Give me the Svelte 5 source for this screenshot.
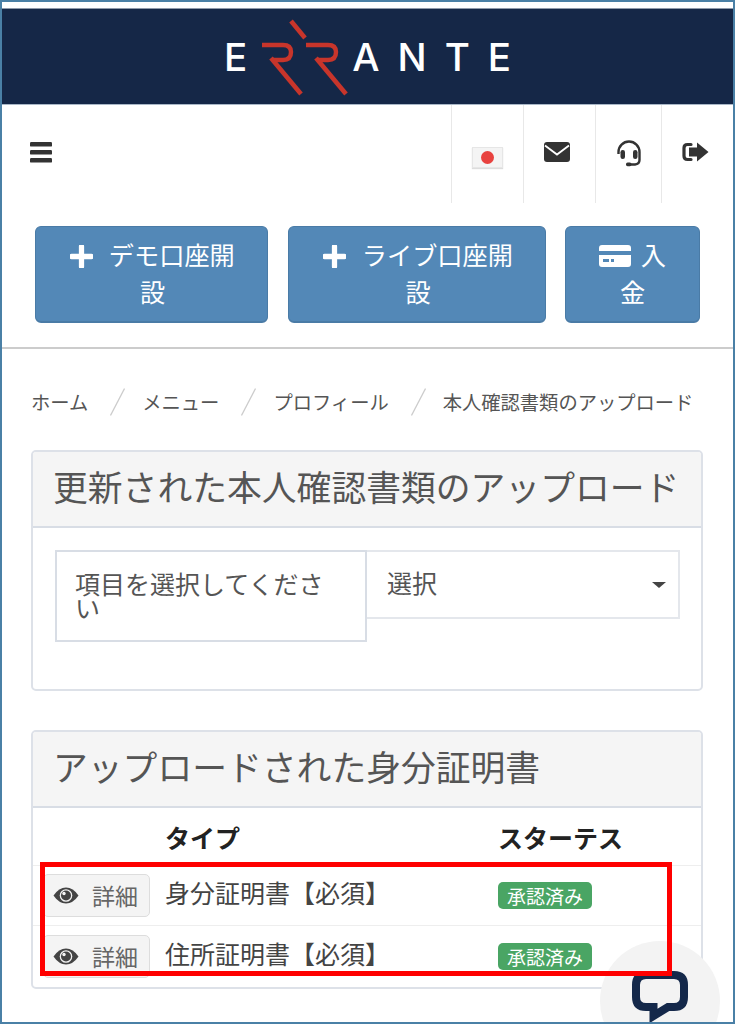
<script>
  const crumbs = ['ホーム', 'メニュー', 'プロフィール', '本人確認書類のアップロード'];
  const docs = ['身分証明書【必須】', '住所証明書【必須】'];
</script>

<div class="frame">
  <header class="brand">
    <span class="e">E</span>
    <svg class="rr" viewBox="0 0 104 97" width="104" height="97" aria-hidden="true">
      <g fill="none" stroke="#c8352b" stroke-width="4.4" stroke-linejoin="round">
        <path d="M15 37H36Q44 37 44 44Q44 52 36 52H26" />
        <path d="M24 50L54 86" stroke-width="4.6" />
        <path d="M44 13L58 30" stroke-width="4.6" />
        <path d="M59 37H81Q89 37 89 44Q89 52 81 52H71" />
        <path d="M69 50L99 86" stroke-width="4.6" />
      </g>
    </svg>
    <span class="ante">ANTE</span>
  </header>

  <nav class="topnav">
    <button class="burger" aria-label="menu">
      <svg viewBox="0 0 24 22" width="24" height="22"><g fill="#333"><rect x="1" y="1" width="22" height="4.6" rx="1.2"/><rect x="1" y="9" width="22" height="4.6" rx="1.2"/><rect x="1" y="17" width="22" height="4.6" rx="1.2"/></g></svg>
    </button>
    <div class="tools">
      <div class="tool flagcell">
        <span class="flag"><i></i></span>
      </div>
      <div class="tool mail">
        <svg viewBox="0 0 26 20" width="26" height="20"><rect width="26" height="20" rx="3" fill="#333"/><path d="M1 3.5L13 12.5L25 3.5" fill="none" stroke="#fff" stroke-width="1.8"/></svg>
      </div>
      <div class="tool narrow">
        <svg viewBox="0 0 28 27" width="28" height="27" fill="none" stroke="#333"><path d="M3.5 14V12A10.5 10.5 0 0 1 24.5 12V20Q24.5 24 20 24.5H15" stroke-width="2.4"/><rect x="5.5" y="10" width="4.5" height="9" rx="2.2" fill="#333" stroke="none"/><rect x="18" y="10" width="4.5" height="9" rx="2.2" fill="#333" stroke="none"/><rect x="11" y="22.6" width="5.5" height="3.6" rx="1.6" fill="#333" stroke="none"/></svg>
      </div>
      <div class="tool out">
        <svg viewBox="0 0 27 20" width="27" height="20"><path d="M9 2.5H5.5Q2 2.5 2 6V14Q2 17.5 5.5 17.5H9" fill="none" stroke="#333" stroke-width="3.2" stroke-linecap="round"/><path d="M15 0.5L26.5 10L15 19.5V14.5H7V5.500H15Z" fill="#333"/></svg>
      </div>
    </div>
  </nav>

  <div class="actions">
    <button class="act a1"><svg class="plus" viewBox="0 0 24 24" width="23" height="23"><path d="M12 1.500V22.500M1.500 12H22.500" stroke="#fff" stroke-width="5.500" stroke-linecap="round"/></svg> <span>デモ口座開設</span></button>
    <button class="act a2"><svg class="plus" viewBox="0 0 24 24" width="23" height="23"><path d="M12 1.500V22.500M1.500 12H22.500" stroke="#fff" stroke-width="5.500" stroke-linecap="round"/></svg> <span>ライブ口座開設</span></button>
    <button class="act a3"><svg class="card" viewBox="0 0 32 22" width="32" height="22"><path fill="#fff" d="M3 0H29Q32 0 32 3V6H0V3Q0 0 3 0ZM0 10H32V19Q32 22 29 22H3Q0 22 0 19ZM4 14V17H10V14ZM12 14V17H15V14Z" fill-rule="evenodd"/></svg> <span>入金</span></button>
  </div>

  <ol class="crumbs">
    {#each crumbs as c, i}
      {#if i > 0}
        <li class="sep" aria-hidden="true"><svg viewBox="0 0 15 28" width="15" height="28"><path d="M14.500 0.500L0.500 27.500" stroke="#ccc" stroke-width="1.300"/></svg></li>
      {/if}
      <li>{c}</li>
    {/each}
  </ol>

  <section class="panel first">
    <h2>更新された本人確認書類のアップロード</h2>
    <div class="pbody">
      <div class="label">項目を選択してください</div>
      <div class="select"><span>選択</span><i class="caret"></i></div>
    </div>
  </section>

  <section class="panel second">
    <h2>アップロードされた身分証明書</h2>
    <table>
      <thead>
        <tr><th class="c1"></th><th class="c2">タイプ</th><th>スターテス</th></tr>
      </thead>
      <tbody>
        {#each docs as d}
          <tr>
            <td class="c1">
              <button class="detail">
                <svg viewBox="0 0 26 17" width="26" height="17"><path d="M0.500 8.500Q6 0.500 13 0.500T25.500 8.500Q20 16.500 13 16.500T0.500 8.500Z" fill="#444"/><circle cx="13" cy="8.500" r="6.300" fill="#f3f3f3"/><circle cx="13" cy="8.500" r="5" fill="#444"/><circle cx="11" cy="6.500" r="1.700" fill="#f3f3f3"/></svg>
                <span>詳細</span>
              </button>
            </td>
            <td class="c2"><span class="doc">{d}</span></td>
            <td><span class="badge">承認済み</span></td>
          </tr>
        {/each}
      </tbody>
    </table>
  </section>

  <div class="chat">
    <svg viewBox="0 0 56 54" width="56" height="54"><path d="M14 4H42Q52 4 52 14V26Q52 36 42 36H36L21.500 45V36H14Q4 36 4 26V14Q4 4 14 4Z" fill="none" stroke="#14284a" stroke-width="8" stroke-linejoin="miter"/></svg>
  </div>
  <div class="redbox"></div>
</div>

<style>
  :global(body) {
    margin: 0;
    background: #fff;
  }
  .frame {
    position: relative;
    box-sizing: border-box;
    width: 735px;
    height: 1024px;
    overflow: hidden;
    border: 2px solid #4a80a6;
    padding-top: 6px;
    background: #fff;
    color: #555;
    font-family: "Noto Sans CJK JP", "Noto Sans", sans-serif;
    text-spacing-trim: space-all;
  }
  button {
    font: inherit;
    cursor: pointer;
  }

  .brand {
    height: 97px;
    display: flex;
    align-items: center;
    justify-content: center;
    background: #152747;
    color: #fff;
    font-family: Inter, sans-serif;
    font-weight: 500;
    font-size: 38.500px;
    line-height: 1;
    border-bottom: 1px solid #a9b7c7;
    box-sizing: border-box;
    border-top: 1px solid #8f9aab;
  }
  .e {
    position: relative;
    top: 1px;
  }
  .rr {
    flex: none;
    margin-right: 1px;
  }
  .ante {
    letter-spacing: 18px;
    margin-right: -18px;
    position: relative;
    top: 1px;
  }

  .topnav {
    height: 98px;
    display: flex;
    justify-content: space-between;
  }
  .burger {
    border: 0;
    background: none;
    padding: 0;
    margin: 36px 0 0 27px;
    height: 24px;
    display: flex;
  }
  .tools {
    display: flex;
  }
  .tool {
    width: 71px;
    border-left: 1px solid #e8e8e8;
    display: flex;
    justify-content: center;
    align-items: flex-start;
    padding-top: 35px;
    box-sizing: content-box;
  }
  .tool.narrow {
    width: 65px;
  }
  .tool.mail {
    padding: 37px 6px 0 0;
    width: 65px;
  }
  .tool.out {
    padding: 37px 4px 0 0;
    width: 67px;
  }
  .flagcell {
    padding-top: 42px;
  }
  .flag {
    width: 31px;
    height: 21px;
    background: #f4f4f4;
    box-shadow: inset 0 0 0 1px #e6e6e6, 0 1px 1px #ddd;
    display: flex;
    align-items: center;
    justify-content: center;
  }
  .flag i {
    width: 13px;
    height: 13px;
    border-radius: 50%;
    background: #e8423f;
  }

  .actions {
    display: flex;
    gap: 20px;
    padding: 23px 0 24px 33px;
    border-bottom: 2px solid #ccc;
  }
  .act {
    flex: none;
    height: 97px;
    box-sizing: border-box;
    background: #5388b7;
    border: 1px solid #4a7ba6;
    border-bottom-width: 2px;
    border-radius: 6px;
    color: #fff;
    font-size: 25.200px;
    line-height: 37px;
    padding: 9px 21px 13px 23px;
    text-align: center;
  }
  .a1 { width: 233px; }
  .a2 { width: 258px; }
  .a3 { width: 135px; padding: 9px 28px 13px 28px; margin-left: -1px; }
  .plus {
    vertical-align: -3px;
    margin-right: 10px;
  }
  .card {
    vertical-align: -2px;
    margin-right: 4px;
  }

  .crumbs {
    list-style: none;
    margin: 0;
    padding: 0 0 0 29px;
    height: 101px;
    display: flex;
    align-items: center;
    font-size: 19.300px;
    line-height: 28px;
    white-space: nowrap;
    color: #555;
    position: relative;
    top: 2px;
  }
  .sep {
    display: flex;
    margin: 0 17px 0 22px;
  }

  .panel {
    margin: 0 30px 0 29px;
    border: 2px solid #dde1e8;
    border-radius: 5px;
    overflow: hidden;
  }
  .panel h2 {
    margin: 0;
    height: 76px;
    box-sizing: border-box;
    background: #f5f5f5;
    border-bottom: 2px solid #d8dde5;
    font-size: 34.800px;
    font-weight: 400;
    line-height: 68px;
    padding-left: 20px;
    white-space: nowrap;
    color: #555;
  }
  .first {
    height: 241px;
    box-sizing: border-box;
  }
  .pbody {
    display: flex;
    align-items: flex-start;
    padding: 22px 21px 0 22px;
    font-size: 25px;
    line-height: 24px;
  }
  .label {
    width: 312px;
    height: 92px;
    box-sizing: border-box;
    border: 2px solid #d8dde5;
    padding: 19px 18px;
  }
  .select {
    flex: 1;
    height: 69px;
    box-sizing: border-box;
    border: 2px solid #e4e7ec;
    border-left: 0;
    display: flex;
    justify-content: space-between;
    align-items: center;
    padding: 0 12px 5px 20px;
  }
  .caret {
    width: 0;
    height: 0;
    border-left: 7px solid transparent;
    border-right: 7px solid transparent;
    border-top: 6px solid #444;
    margin-top: 6px;
  }

  .second {
    margin-top: 39px;
    height: 259px;
    box-sizing: border-box;
  }
  table {
    border-collapse: collapse;
    width: 100%;
    table-layout: fixed;
    font-size: 25px;
  }
  thead tr {
    height: 57px;
    border-bottom: 1px solid #eee;
  }
  th {
    text-align: left;
    font-weight: 700;
    color: #222;
    font-size: 25px;
    padding: 2px 0 0;
    line-height: 30px;
  }
  tbody tr {
    height: 62px;
    border-bottom: 1px solid #eee;
  }
  tbody tr:first-child {
    height: 60px;
  }
  tbody tr:last-child {
    border-bottom: 0;
  }
  td {
    padding: 0;
  }
  .c1 {
    width: 132px;
    padding-left: 10px;
    box-sizing: border-box;
  }
  .c2 {
    width: 333px;
  }
  .doc {
    display: block;
    line-height: 30px;
    margin-top: -7px;
    color: #444;
  }
  .detail {
    width: 107px;
    height: 43px;
    box-sizing: border-box;
    background: #f4f4f4;
    border: 1px solid #ddd;
    border-radius: 5px;
    color: #666;
    font-size: 23px;
    display: flex;
    align-items: center;
    gap: 13px;
    padding: 0 0 0 9px;
    line-height: 30px;
  }
  .badge {
    display: block;
    width: fit-content;
    background: #4aa564;
    color: #fff;
    font-size: 19px;
    line-height: 27px;
    height: 27px;
    padding: 0 9px;
    border-radius: 5px;
    font-weight: 400;
  }

  .chat {
    position: absolute;
    left: 598px;
    top: 939px;
    width: 120px;
    height: 120px;
    border-radius: 50%;
    background: #f3f3f3;
    display: flex;
    justify-content: center;
    align-items: flex-start;
    padding-top: 30px;
    box-sizing: border-box;
  }
  .redbox {
    position: absolute;
    left: 38px;
    top: 860px;
    width: 632px;
    height: 114px;
    box-sizing: border-box;
    border: 5px solid #f00;
    pointer-events: none;
  }
</style>
